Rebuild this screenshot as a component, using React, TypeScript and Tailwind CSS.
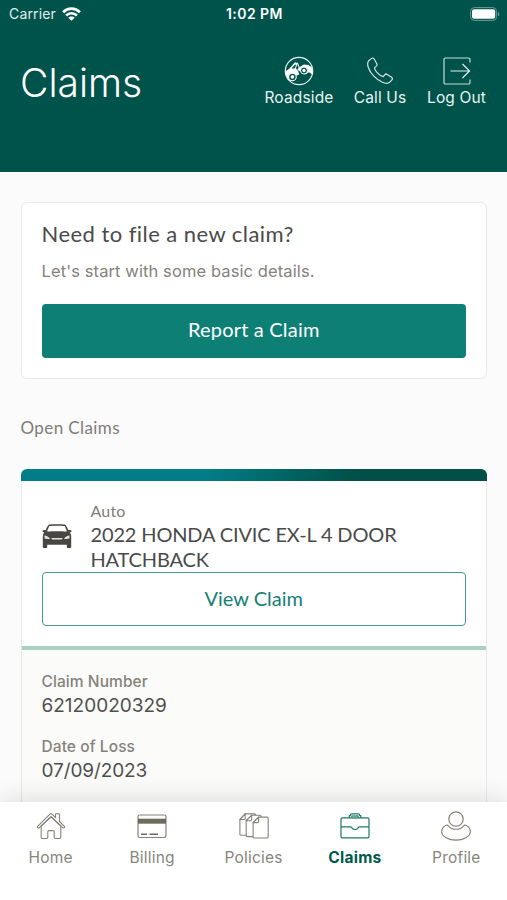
import type { ReactNode } from "react";

const ui = "font-['Inter','Liberation_Sans',sans-serif]";
const display = "font-['Lato','Liberation_Sans',sans-serif]";

function WifiIcon() {
  return (
    <svg width="19" height="14" viewBox="0 0 19 14" fill="none" stroke="white" strokeWidth="2.700">
      <path d="M1.100 5.200C5.800.5 13.200.5 17.900 5.200" />
      <path d="M4.100 8.500c3.100-3 7.700-3 10.800 0" />
      <path d="M9.500 13.700 6.300 10.700c1.700-1.700 4.700-1.700 6.400 0z" fill="white" stroke="none" />
    </svg>
  );
}

function BatteryIcon() {
  return (
    <svg width="30" height="14" viewBox="0 0 30 14">
      <rect x=".6" y=".6" width="26" height="12.800" rx="3.800" fill="none" stroke="#6d9a94" strokeWidth="1" />
      <rect x="2" y="2.200" width="23.200" height="9.600" rx="2.200" fill="white" />
      <path d="M28 4.700c1.900.8 1.900 3.800 0 4.600z" fill="#6d9a94" />
    </svg>
  );
}

function RoadsideIcon() {
  return (
    <svg width="30" height="30" viewBox="0 0 30 30" fill="none" stroke="#e4f1ef">
      <circle cx="15" cy="15" r="13.700" strokeWidth="1.200" />
      <path d="M1.600 15.200 5.500 12.600 11 6.300l2.800.9-1.900 5 2.200 2.700 1.200 3.600-4 1.500-1 3.500-6.200.5C2.600 21.500 1.600 18.500 1.600 15.200z" fill="white" stroke="none" />
      <path d="m7.500 12.600 3.600-4.100 1.100.4-1.500 3.700z" fill="#00534b" stroke="none" />
      <path d="m13.200 6.800 2 4.400-1.300 2.800" strokeWidth="1.200" />
      <path d="m13.900 14 2.300-3.300 3.600-2.300 4.700.6 3.500 2.500.7 7-3.900-2.200-3.500 2.300-4.600-2.700z" fill="white" stroke="none" />
      <circle cx="8.400" cy="20.900" r="3.800" fill="#00534b" stroke="white" strokeWidth="1.100" />
      <circle cx="8.400" cy="20.900" r="1.800" fill="white" stroke="none" />
      <circle cx="20" cy="14.500" r="3.500" fill="#00534b" stroke="white" />
      <circle cx="20" cy="14.500" r="1.700" fill="white" stroke="none" />
    </svg>
  );
}

function CallIcon() {
  return (
    <svg width="30" height="30" viewBox="0 0 30 30" fill="none" stroke="#d5e6e4" strokeWidth="1.200" strokeLinejoin="round">
      <path d="M6.600 2.400 3.700 4.800C1.200 7.500 3.500 14.800 8.800 20.200s12.200 8.500 15.600 6.400l2.500-2.800c.8-.9.600-1.800-.3-2.500l-4.400-2.900c-.9-.6-1.800-.5-2.500.4l-1.500 1.900c-1.700-.2-3.600-1.500-5.500-3.500S9.400 13.300 9.600 11.600l1.700-1.500c.9-.7 1-1.500.5-2.400L9 2.800c-.6-.9-1.500-1.100-2.400-.4z" />
    </svg>
  );
}

function LogOutIcon() {
  return (
    <svg width="30" height="30" viewBox="0 0 30 30" fill="none" stroke="#c5dcd9" strokeWidth="1.200">
      <path d="M28 6.500V3.300c0-.9-.5-1.300-1.300-1.300H3.300C2.500 2 2 2.400 2 3.300v23.400c0 .9.500 1.300 1.300 1.300h23.400c.8 0 1.300-.4 1.300-1.300v-3.200" />
      <path d="M8.500 15h19M20.500 8l7 7-7 7" stroke="#e4f1ef" />
    </svg>
  );
}

function CarIcon() {
  return (
    <svg width="30" height="24" viewBox="0 0 30 24" fill="#474641">
      <path fillRule="evenodd" d="M7.200.6C9 .1 21 .1 22.800.6c1.300.4 2.600 3.400 3.500 5.600.8-.4 2.700-.3 3.200.5.300.8-.3 1.500-1.800 1.700 1 1.200 1.500 2.400 1.500 4.200V23c0 .5-.3.900-.9.900h-2.600c-.6 0-.9-.4-.9-.9v-2.200H5.200V23c0 .5-.3.900-.9.900H1.700c-.6 0-.9-.4-.9-.9V12.600c0-1.800.5-3 1.500-4.200C.8 8.200.200 7.500.500 6.700c.5-.8 2.400-.9 3.200-.5C4.600 4 5.900 1 7.200.6zM7.400 2C6.700 3 5.700 5.600 5.100 7.500c5.700-.4 14.100-.4 19.800 0C24.300 5.600 23.300 3 22.600 2 20.500 1.500 9.500 1.500 7.400 2z" />
      <path d="M2.400 11.400c2.200.2 4.500 1.200 5.700 3.300-1.900.4-4 .4-5.500-.1zM27.600 11.400c-2.200.2-4.500 1.200-5.700 3.300 1.900.4 4 .4 5.500-.1zM9.300 14h11.400l-.8 1.500h-9.800z" fill="#e4e3dd" />
    </svg>
  );
}

function HomeIcon() {
  return (
    <svg width="30" height="30" viewBox="0 0 30 30" fill="none" stroke="#858278" strokeWidth="1.100" strokeLinejoin="round">
      <path d="M1.600 15.300 14 3.200c.6-.6 1.400-.6 2 0l3.500 3.500V3.600c0-.6.3-.9.900-.9h2.200c.6 0 .9.300.9.900v6.900l4.900 4.800c.8.800-.7 2.300-1.500 1.500L15 5.700 3.100 16.800c-.8.800-2.300-.7-1.500-1.500z" />
      <path d="M5.200 15v11.300c0 .8.400 1.200 1.200 1.200h4.200c.8 0 1.200-.4 1.200-1.200v-5.500c0-.8.400-1.200 1.200-1.200h4c.8 0 1.200.4 1.200 1.200v5.500c0 .8.400 1.200 1.200 1.200h4.200c.8 0 1.200-.4 1.200-1.200V15L15 5.900z" />
      <path d="M5.200 15 15 8.600l9.800 6.400" stroke="none" />
    </svg>
  );
}

function BillingIcon() {
  return (
    <svg width="30" height="30" viewBox="0 0 30 30" fill="none" stroke="#858278" strokeWidth="1.200">
      <rect x="1" y="4" width="28" height="22.500" rx="1.700" />
      <path d="M1 10.200h28" stroke="#706c5d" strokeWidth="5" />
      <path d="M4 23.200h6M12.500 23.200h8.500" stroke="#706c5d" strokeWidth="1.600" />
    </svg>
  );
}

function PoliciesIcon() {
  return (
    <svg width="30" height="30" viewBox="0 0 30 30" fill="white" stroke="#858278" strokeWidth="1.100" strokeLinejoin="round">
      <path d="M6.200 2.900h9.300c.8 0 1.300.5 1.300 1.300v20H1.900c-.6 0-1-.4-1-1V8.500z" />
      <path d="M6.200 2.900v4.500c0 .7-.4 1.100-1.100 1.100H.9z" />
      <path d="M12.600 4.300h8.200c.8 0 1.300.5 1.300 1.300v20H8.200c-.6 0-1-.4-1-1V9.700z" />
      <path d="M12.600 4.300v4.300c0 .7-.4 1.100-1.100 1.100H7.200z" />
      <path d="M19.600 6.100h8.300c.8 0 1.300.5 1.300 1.300v18.300c0 .8-.5 1.300-1.300 1.300H15.400c-.8 0-1.300-.5-1.300-1.300V11.600z" />
      <path d="M19.600 6.100v4.400c0 .7-.4 1.100-1.100 1.100h-4.400z" />
    </svg>
  );
}

function ClaimsIcon() {
  return (
    <svg width="30" height="30" viewBox="0 0 30 30" fill="none" stroke="#20776b" strokeWidth="1.200" strokeLinejoin="round">
      <rect x="1" y="6.900" width="28" height="20" rx="1.300" />
      <path d="M1 15.800h9.700c.5 0 .8.300 1 .8.600 1.300 1.700 2 3.300 2s2.700-.7 3.300-2c.2-.5.500-.8 1-.8H29" />
      <path d="M9.200 6.900V4.600h1.100c0-1.200.5-1.800 1.500-1.800h6.400c1 0 1.500.6 1.500 1.800h1.100v2.300" />
      <path d="M11.600 6.900V4.800h6.800v2.100z" fill="#7fafa6" stroke="#4d9287" strokeWidth="1" />
    </svg>
  );
}

function ProfileIcon() {
  return (
    <svg width="30" height="30" viewBox="0 0 30 30" fill="none" stroke="#858278" strokeWidth="1.200" strokeLinejoin="round">
      <circle cx="15" cy="8" r="7.200" />
      <path d="M5.300 14.300c.8-.4 1.400-.2 2 .5 4 4.600 11.400 4.600 15.400 0 .6-.7 1.200-.9 2-.5 2.400 1 4.600 3.600 4.600 6.400 0 4.600-7 8.500-14.300 8.500S.7 25.300.7 20.700c0-2.800 2.200-5.400 4.600-6.400z" />
    </svg>
  );
}

function HeaderAction({ icon, label, width }: { icon: ReactNode; label: string; width: string }) {
  return (
    <button className={`flex flex-col items-center ${width}`}>
      {icon}
      <span className="mt-[2px] whitespace-nowrap text-[15.500px] leading-[20px] tracking-[0.15px] text-[#e8f3f1]">{label}</span>
    </button>
  );
}

function Tab({ icon, label, active = false }: { icon: ReactNode; label: string; active?: boolean }) {
  return (
    <button className="flex flex-1 flex-col items-center pt-[9px]">
      {icon}
      <span className={`mt-[7px] text-[15.500px] leading-[20px] ${active ? "font-bold tracking-[0.250px] text-[#00594c]" : "tracking-[0.2px] text-[#87857e]"}`}>{label}</span>
    </button>
  );
}

export default function App() {
  return (
    <div className={`flex h-[900px] w-[507px] flex-col overflow-hidden bg-[#fbfbfb] ${ui}`}>
      <header className="h-[172px] shrink-0 bg-[#00534b] text-white">
        <div className="grid h-[27px] grid-cols-3 items-center pr-[7px] pl-[9px]">
          <div className="flex items-center gap-[6px] text-[14px] tracking-[0.150px] text-[#e0eeec]">
            <span>Carrier</span>
            <WifiIcon />
          </div>
          <span className="text-center text-[14px] font-semibold tracking-[0.450px]">1:02 PM</span>
          <div className="flex justify-end"><BatteryIcon /></div>
        </div>
        <div className="flex justify-between pr-[20px] pl-[20px]">
          <h1 className="mt-[32px] text-[39px] leading-[48px] font-light">Claims</h1>
          <div className="mt-[29px] flex gap-[19px]">
            <HeaderAction icon={<RoadsideIcon />} label="Roadside" width="w-[70px]" />
            <HeaderAction icon={<CallIcon />} label="Call Us" width="w-[54px]" />
            <HeaderAction icon={<LogOutIcon />} label="Log Out" width="w-[61px]" />
          </div>
        </div>
      </header>

      <main className="min-h-0 flex-1 overflow-hidden pr-[20px] pl-[20.500px] pt-[29.500px]">
        <section className="h-[177px] rounded-[6px] border border-[#e9e9e6] bg-white px-[20px]">
          <h2 className={`mt-[16px] text-[22px] leading-[30px] tracking-[0.450px] text-[#4a4a4a] ${display}`}>Need to file a new claim?</h2>
          <p className="mt-[12px] text-[16.500px] leading-[20px] tracking-[0.1px] text-[#85827b]">Let's start with some basic details.</p>
          <button className={`mt-[23px] h-[54px] w-full rounded-[4px] bg-[#0e7f74] pb-[3px] text-[20px] tracking-[0.2px] text-white ${display}`}>Report a Claim</button>
        </section>

        <h3 className={`mt-[37.500px] text-[17px] leading-[24px] tracking-[0.4px] text-[#807d76] ${display}`}>Open Claims</h3>

        <section className="mt-[29px]">
          <div className="h-[12px] rounded-t-[6px] bg-linear-to-r from-[#007d86] from-40% to-[#005048] to-72%" />
          <div className="border-x border-[#e8e8e6] bg-white">
            <div className="h-[165px] px-[20px] pt-[20px]">
              <div className="flex h-[71px]">
                <div className="w-[49px] pt-[23px]"><CarIcon /></div>
                <div className={display}>
                  <p className="text-[16px] leading-[20px] tracking-[0.2px] text-[#807d76]">Auto</p>
                  <p className="mt-px text-[20px] leading-[24.500px] tracking-[-0.150px] text-[#4a4a4a]">2022 HONDA CIVIC EX-L 4 DOOR<br />HATCHBACK</p>
                </div>
              </div>
              <button className={`h-[54px] w-full rounded-[4px] border-[1.500px] border-[#449b93] bg-white pb-[2px] text-[20px] text-[#158073] ${display}`}>View Claim</button>
            </div>
            <div className="h-[4px] bg-[#a8d0c4]" />
            <div className="h-[180px] bg-[#fbfbfa] px-[20px] pt-[22px]">
              <p className="text-[15.500px] leading-[20px] font-medium tracking-[0.080px] text-[#85827b]">Claim Number</p>
              <p className="mt-[2px] text-[19px] leading-[24px] text-[#4f4f4d]">62120020329</p>
              <p className="mt-[19px] text-[15.500px] leading-[20px] font-medium tracking-[0.080px] text-[#85827b]">Date of Loss</p>
              <p className="mt-[2px] text-[19px] leading-[24px] tracking-[-0.1px] text-[#4f4f4d]">07/09/2023</p>
            </div>
          </div>
        </section>
      </main>

      <nav className="z-10 flex h-[98px] shrink-0 bg-white shadow-[0_-2px_24px_rgba(0,0,0,0.13)]">
        <Tab icon={<HomeIcon />} label="Home" />
        <Tab icon={<BillingIcon />} label="Billing" />
        <Tab icon={<PoliciesIcon />} label="Policies" />
        <Tab icon={<ClaimsIcon />} label="Claims" active />
        <Tab icon={<ProfileIcon />} label="Profile" />
      </nav>
    </div>
  );
}
